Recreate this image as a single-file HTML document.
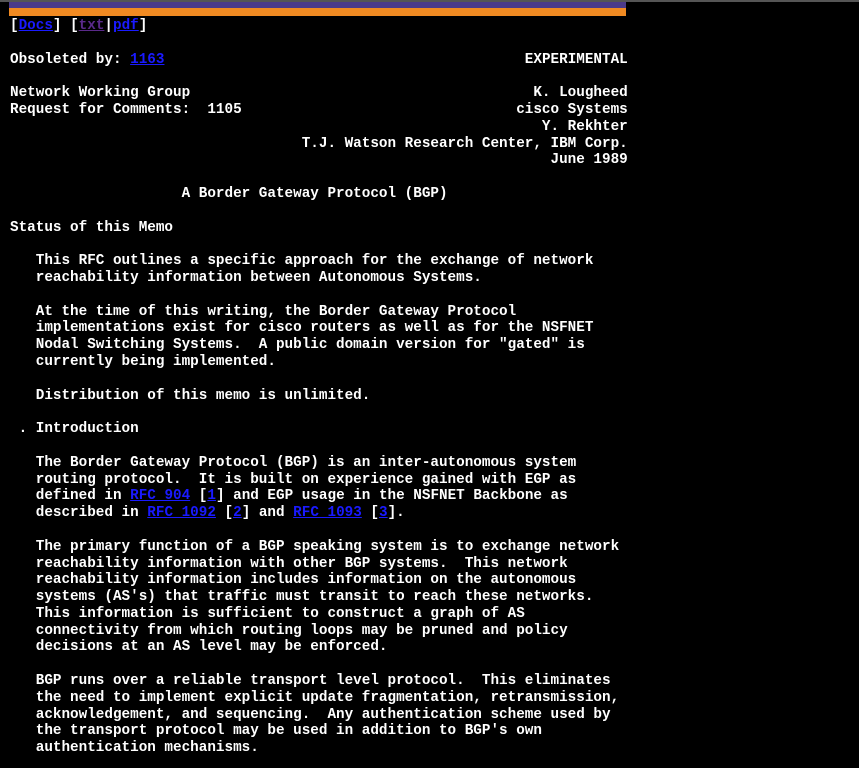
<!DOCTYPE html>
<html><head><meta charset="utf-8">
<style>
html,body{margin:0;padding:0;background:#000;width:859px;height:768px;overflow:hidden}
.topline{position:absolute;left:0;top:0;width:859px;height:2px;background:#555}
.bar1{position:absolute;left:9px;top:2px;width:617px;height:6px;background:#4b3a8a}
.bar2{position:absolute;left:9px;top:8px;width:617px;height:8px;background:#f08a22}
pre{position:absolute;left:10px;top:18px;margin:0;font-family:"Liberation Mono",monospace;font-weight:bold;font-size:14.3px;line-height:16.8px;color:#fff}
a{color:#1a1aff;text-decoration:underline}
a.v{color:#5a2a8a}
</style></head><body>
<div class="topline"></div><div class="bar1"></div><div class="bar2"></div>
<pre>[<a href="#">Docs</a>] [<a class="v" href="#">txt</a>|<a href="#">pdf</a>]

Obsoleted by: <a href="#">1163</a>                                          EXPERIMENTAL

Network Working Group                                        K. Lougheed
Request for Comments:  1105                                cisco Systems
                                                              Y. Rekhter
                                  T.J. Watson Research Center, IBM Corp.
                                                               June 1989

                    A Border Gateway Protocol (BGP)

Status of this Memo

   This RFC outlines a specific approach for the exchange of network
   reachability information between Autonomous Systems.

   At the time of this writing, the Border Gateway Protocol
   implementations exist for cisco routers as well as for the NSFNET
   Nodal Switching Systems.  A public domain version for "gated" is
   currently being implemented.

   Distribution of this memo is unlimited.

 . Introduction

   The Border Gateway Protocol (BGP) is an inter-autonomous system
   routing protocol.  It is built on experience gained with EGP as
   defined in <a href="#">RFC 904</a> [<a href="#">1</a>] and EGP usage in the NSFNET Backbone as
   described in <a href="#">RFC 1092</a> [<a href="#">2</a>] and <a href="#">RFC 1093</a> [<a href="#">3</a>].

   The primary function of a BGP speaking system is to exchange network
   reachability information with other BGP systems.  This network
   reachability information includes information on the autonomous
   systems (AS's) that traffic must transit to reach these networks.
   This information is sufficient to construct a graph of AS
   connectivity from which routing loops may be pruned and policy
   decisions at an AS level may be enforced.

   BGP runs over a reliable transport level protocol.  This eliminates
   the need to implement explicit update fragmentation, retransmission,
   acknowledgement, and sequencing.  Any authentication scheme used by
   the transport protocol may be used in addition to BGP's own
   authentication mechanisms.
</pre>
</body></html>
